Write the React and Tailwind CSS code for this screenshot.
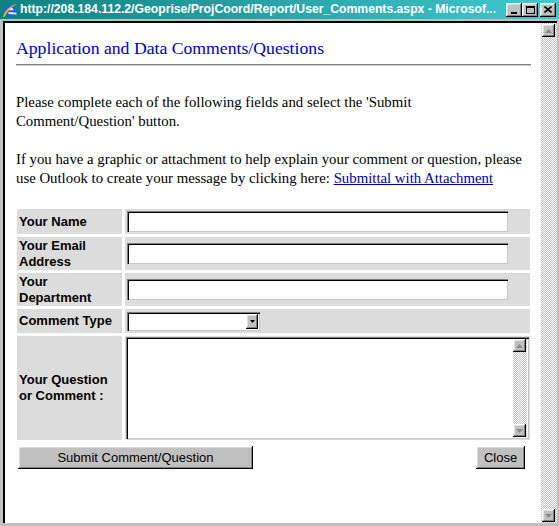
import React from 'react';

const serif = "font-['Liberation_Serif','Times_New_Roman',serif]";
const sans = "font-['Liberation_Sans',Arial,sans-serif]";

const bevel =
  'shadow-[inset_-1px_-1px_0_#000,inset_1px_1px_0_#fff,inset_-2px_-2px_0_#808080,inset_2px_2px_0_#dfdfdf]';
const sunken =
  'shadow-[inset_1px_1px_0_#808080,inset_2px_2px_0_#000,inset_-1px_-1px_0_#c8c8c8]';

function IeIcon() {
  return (
    <svg width="16" height="16" viewBox="0 0 16 16" className="shrink-0 block">
      <circle cx="8.5" cy="9" r="4.6" fill="#dfe8ff" stroke="#2a5cf0" strokeWidth="2.8" />
      <rect x="4" y="8.2" width="9.2" height="2" fill="#2a5cf0" />
      <rect x="9.5" y="10.6" width="5" height="1.8" fill="#dfe8ff" />
      <path d="M1 15 C 2.5 8.5, 9 3, 15.5 1.5 C 11 4, 5.5 8.5, 3 14.5 Z" fill="#f0b800" />
    </svg>
  );
}

function TitleButton({ children, className = '' }) {
  return (
    <div className={`shrink-0 w-[16px] h-[14px] bg-[#c0c0c0] flex items-center justify-center ${bevel} ${className}`}>
      {children}
    </div>
  );
}

function ArrowBox({ dir, className = '' }) {
  return (
    <div className={`shrink-0 w-[13px] h-[13px] bg-[#c0c0c0] flex items-center justify-center ${bevel} ${className}`}>
      <svg width="7" height="4" viewBox="0 0 7 4">
        {dir === 'up' ? (
          <path d="M0 4 L3.5 0 L7 4 Z" fill="#8a8a8a" />
        ) : (
          <path d="M0 0 L3.5 4 L7 0 Z" fill="#8a8a8a" />
        )}
      </svg>
    </div>
  );
}

const checker =
  'bg-[repeating-conic-gradient(#c0c0c0_0%_25%,#ffffff_0%_50%)] bg-[length:2px_2px]';

function LabelCell({ children }) {
  return (
    <div className={`bg-[#dcdcdc] flex items-center pl-[2px] ${sans} text-[13px] leading-[16px] font-bold text-black`}>
      {children}
    </div>
  );
}

export default function App() {
  return (
    <div className="w-[559px] h-[526px] bg-[#c0c0c0] flex flex-col overflow-hidden">
      {/* Title bar */}
      <div className="h-[19px] flex items-center bg-gradient-to-r from-[#0e8282] to-[#42c8d0] pl-[2px] pr-[3px]">
        <IeIcon />
        <div className={`ml-[2px] text-white font-bold text-[12.2px] whitespace-nowrap overflow-hidden ${sans} flex-1`}>
          http://208.184.112.2/Geoprise/ProjCoord/Report/User_Comments.aspx - Microsof...
        </div>
        <TitleButton>
          <div className="w-[6px] h-[2px] bg-black mt-[6px]" />
        </TitleButton>
        <TitleButton>
          <div className="w-[9px] h-[8px] border border-black border-t-2" />
        </TitleButton>
        <TitleButton className="ml-[2px]">
          <svg width="8" height="7" viewBox="0 0 8 7">
            <path d="M0.5 0.5 L7.5 6.5 M7.5 0.5 L0.5 6.5" stroke="#000" strokeWidth="1.6" />
          </svg>
        </TitleButton>
      </div>

      {/* Window body */}
      <div className="flex-1 flex pt-[2px] pl-[3px] pr-[2px] pb-[3px]">
        <div className="flex-1 flex border-t-2 border-l-2 border-black bg-white">
          <div className={`flex-1 pl-[11px] pr-[10px] ${serif} text-black`}>
            <h1 className="pt-[15px] text-[17.7px] leading-[20px] text-[#0000cc] font-normal whitespace-nowrap">
              Application and Data Comments/Questions
            </h1>
            <div className="mt-[6px] h-[2px] border-t border-[#808080] bg-[#d0d0d0]" />

            <p className="mt-[27px] text-[14.8px] leading-[19px] whitespace-nowrap">
              Please complete each of the following fields and select the 'Submit
              <br />
              Comment/Question' button.
            </p>
            <p className="mt-[19px] text-[14.8px] leading-[19px] whitespace-nowrap">
              If you have a graphic or attachment to help explain your comment or question, please
              <br />
              use Outlook to create your message by clicking here:{' '}
              <a className="text-[#0000a0] underline">Submittal with Attachment</a>
            </p>

            <div className="mt-[21px] ml-[1px] w-[513px] grid grid-cols-[105px_405px] grid-rows-[25px_33px_33px_24px_104px] gap-[3px]">
              <LabelCell>Your Name</LabelCell>
              <div className="bg-[#dcdcdc] flex items-center pl-[2px]">
                <div className={`w-[381px] h-[21px] bg-white ${sunken}`} />
              </div>

              <LabelCell>
                Your Email
                <br />
                Address
              </LabelCell>
              <div className="bg-[#dcdcdc] flex items-center pl-[2px]">
                <div className={`w-[381px] h-[21px] bg-white ${sunken}`} />
              </div>

              <LabelCell>
                Your
                <br />
                Department
              </LabelCell>
              <div className="bg-[#dcdcdc] flex items-center pl-[2px]">
                <div className={`w-[381px] h-[21px] bg-white ${sunken}`} />
              </div>

              <LabelCell>Comment Type</LabelCell>
              <div className="bg-[#dcdcdc] flex items-center pl-[2px]">
                <div className={`w-[133px] h-[19px] bg-white flex justify-end items-center pr-[2px] ${sunken}`}>
                  <div className={`w-[12px] h-[15px] bg-[#c0c0c0] flex items-center justify-center ${bevel}`}>
                    <svg width="5" height="3" viewBox="0 0 5 3">
                      <path d="M0 0 L2.5 3 L5 0 Z" fill="#000" />
                    </svg>
                  </div>
                </div>
              </div>

              <LabelCell>
                Your Question
                <br />
                or Comment :
              </LabelCell>
              <div className="bg-[#dcdcdc] pl-[1px] pt-[1px]">
                <div className={`w-[403px] h-[102px] bg-white flex justify-end p-[2px] ${sunken}`}>
                  <div className={`w-[14px] h-full flex flex-col justify-between ${checker}`}>
                    <ArrowBox dir="up" />
                    <ArrowBox dir="down" />
                  </div>
                </div>
              </div>
            </div>

            <div className={`mt-[6px] flex ${sans} text-[13px] text-black`}>
              <div className={`ml-[2px] w-[235px] h-[23px] bg-[#c0c0c0] flex items-center justify-center ${bevel}`}>
                Submit Comment/Question
              </div>
              <div className={`ml-auto mr-[6px] w-[49px] h-[23px] bg-[#c0c0c0] flex items-center justify-center ${bevel}`}>
                Close
              </div>
            </div>
          </div>

          {/* Scrollbar */}
          <div className={`w-[16px] flex flex-col justify-between py-[1px] pl-[1px] ${checker}`}>
            <ArrowBox dir="up" />
            <ArrowBox dir="down" />
          </div>
        </div>
      </div>
    </div>
  );
}
